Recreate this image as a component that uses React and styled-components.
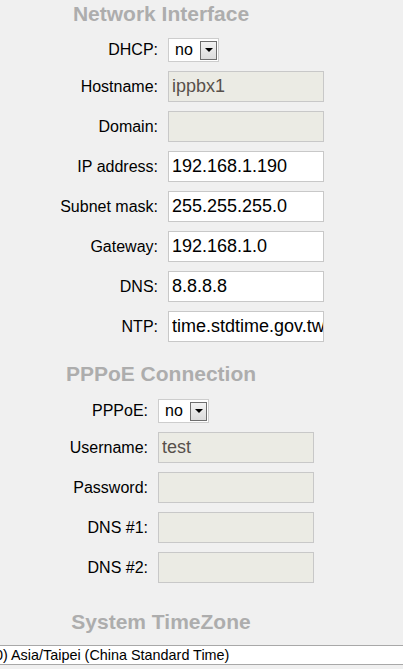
import styled, { createGlobalStyle } from "styled-components";

const GlobalStyle = createGlobalStyle`
  html, body {
    margin: 0;
    padding: 0;
    background: #f0f0f0;
    font-family: "Liberation Sans", Arial, sans-serif;
    color: #000;
    overflow: hidden;
  }
`;

const Page = styled.div`
  padding-top: 2px;
  width: 403px;
`;

const SectionTitle = styled.h2`
  width: 322px;
  margin: ${(p) => p.$top || 0}px 0 0 0;
  text-align: center;
  font-size: 21px;
  line-height: 24px;
  font-weight: bold;
  color: #adadad;
`;

const FormGrid = styled.div`
  display: grid;
  grid-template-columns: ${(p) => p.$labelWidth}px 156px;
  column-gap: 10px;
  row-gap: 9px;
  align-items: center;
  margin-top: ${(p) => p.$top || 12}px;
`;

const Label = styled.label`
  text-align: right;
  font-size: 16px;
  line-height: 18px;
  white-space: nowrap;
`;

const TextField = styled.input`
  box-sizing: border-box;
  width: 156px;
  height: 31px;
  margin: 0;
  padding: 0 0 0 3px;
  border: 1px solid #c8c8c8;
  background: #fff;
  font-family: "Liberation Sans", Arial, sans-serif;
  font-size: 18px;
  color: #000;
  outline: none;

  &:disabled {
    background: #ebebe4;
    color: #57504b;
  }
`;

const SelectBox = styled.div`
  box-sizing: border-box;
  justify-self: start;
  width: 51px;
  height: 24px;
  display: flex;
  align-items: center;
  justify-content: space-between;
  border: 1px solid #cdcdcd;
  background: #fff;
  padding: 0 1px 0 6px;
  font-size: 16px;
`;

const ArrowButton = styled.span`
  box-sizing: border-box;
  width: 17px;
  height: 19px;
  display: flex;
  align-items: center;
  justify-content: center;
  border: 1px solid #6e6e6e;
  background: linear-gradient(#f2f2f2, #dcdcdc);

  &::after {
    content: "";
    width: 0;
    height: 0;
    border-left: 4px solid transparent;
    border-right: 4px solid transparent;
    border-top: 4px solid #000;
  }
`;

const ZoneBar = styled.div`
  box-sizing: border-box;
  margin-top: 11px;
  width: 403px;
  height: 20px;
  border-top: 1px solid #a8a8a8;
  border-bottom: 1px solid #a8a8a8;
  background: #fff;
  font-size: 14.4px;
  line-height: 18px;
  white-space: nowrap;
  overflow: hidden;
  text-indent: -5px;
`;

function Select({ value }) {
  return (
    <SelectBox>
      <span>{value}</span>
      <ArrowButton />
    </SelectBox>
  );
}

const networkFields = [
  { label: "Hostname:", value: "ippbx1", disabled: true },
  { label: "Domain:", value: "", disabled: true },
  { label: "IP address:", value: "192.168.1.190" },
  { label: "Subnet mask:", value: "255.255.255.0" },
  { label: "Gateway:", value: "192.168.1.0" },
  { label: "DNS:", value: "8.8.8.8" },
  { label: "NTP:", value: "time.stdtime.gov.tw" },
];

const pppoeFields = [
  { label: "Username:", value: "test", disabled: true },
  { label: "Password:", value: "", disabled: true },
  { label: "DNS #1:", value: "", disabled: true },
  { label: "DNS #2:", value: "", disabled: true },
];

function Fields({ items }) {
  return items.map((f) => [
    <Label key={f.label}>{f.label}</Label>,
    <TextField
      key={f.label + "-input"}
      defaultValue={f.value}
      disabled={f.disabled}
      readOnly
    />,
  ]);
}

function App() {
  return (
    <Page>
      <GlobalStyle />
      <SectionTitle>Network Interface</SectionTitle>
      <FormGrid $labelWidth={158} $top={12}>
        <Label>DHCP:</Label>
        <Select value="no" />
        <Fields items={networkFields} />
      </FormGrid>

      <SectionTitle $top={20}>PPPoE Connection</SectionTitle>
      <FormGrid $labelWidth={148} $top={13}>
        <Label>PPPoE:</Label>
        <Select value="no" />
        <Fields items={pppoeFields} />
      </FormGrid>

      <SectionTitle $top={27}>System TimeZone</SectionTitle>
      <ZoneBar>0) Asia/Taipei (China Standard Time)</ZoneBar>
    </Page>
  );
}

export default App;
